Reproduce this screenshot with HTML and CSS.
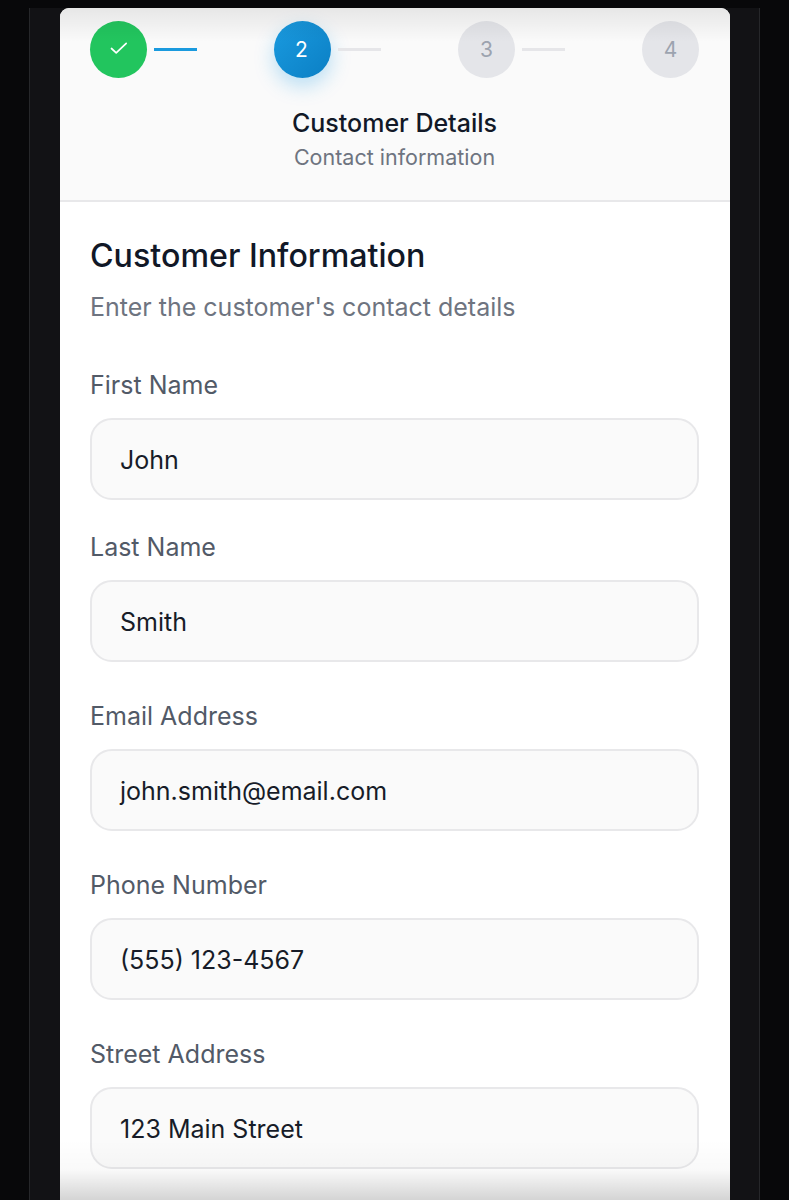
FILE: index.html
```html
<!DOCTYPE html>
<html lang="en">
<head>
    <meta charset="UTF-8">
    <meta name="viewport" content="width=device-width, initial-scale=1.0">
    <title>Customer Details</title>
    <link rel="stylesheet" href="styles.css">
</head>
<body>
    <div class="phone-frame">
        <div class="phone-bezel">
            <div class="card">
                <div class="wizard-header">
                    <div class="stepper">
                        <div class="step">
                            <div class="step-circle done">
                                <svg class="check" width="20" height="20" viewBox="0 0 20 20" fill="none" stroke="#fff" stroke-width="1.7" stroke-linecap="round" stroke-linejoin="round"><path d="M2.5 10.5l4.7 4.3 10-9.5"/></svg>
                            </div>
                            <div class="step-line active"></div>
                        </div>
                        <div class="step">
                            <div class="step-circle current">2</div>
                            <div class="step-line"></div>
                        </div>
                        <div class="step">
                            <div class="step-circle">3</div>
                            <div class="step-line"></div>
                        </div>
                        <div class="step last">
                            <div class="step-circle">4</div>
                        </div>
                    </div>
                    <div class="step-title">Customer Details</div>
                    <div class="step-subtitle">Contact information</div>
                </div>
                <div class="form-body">
                    <h2 class="form-title">Customer Information</h2>
                    <p class="form-hint">Enter the customer's contact details</p>
                    <div class="field first">
                        <label>First Name</label>
                        <div class="input">John</div>
                    </div>
                    <div class="field tight">
                        <label>Last Name</label>
                        <div class="input">Smith</div>
                    </div>
                    <div class="field">
                        <label>Email Address</label>
                        <div class="input">john.smith@email.com</div>
                    </div>
                    <div class="field">
                        <label>Phone Number</label>
                        <div class="input">(555) 123-4567</div>
                    </div>
                    <div class="field">
                        <label>Street Address</label>
                        <div class="input">123 Main Street</div>
                    </div>
                </div>
            </div>
        </div>
    </div>
    <div class="fade-top"></div>
    <div class="fade-bottom"></div>
</body>
</html>
```
FILE: styles.css
```css
* {
    box-sizing: border-box;
}

html, body {
    margin: 0;
    padding: 0;
    height: 1200px;
    overflow: hidden;
}

body {
    font-family: 'Inter', 'Liberation Sans', sans-serif;
    background-color: #08080a;
    position: relative;
}

.phone-frame {
    height: 1200px;
    padding: 8px 29px 0 29px;
}

.phone-bezel {
    height: 100%;
    background-color: #121215;
    border-left: 1px solid #26272a;
    border-right: 1px solid #26272a;
    padding: 0 29px 0 30px;
}

.card {
    height: 100%;
    background-color: #fff;
    border-radius: 9px 9px 0 0;
    overflow: hidden;
}

.wizard-header {
    height: 194px;
    background-color: #fafafa;
    border-bottom: 2px solid #e8e8ea;
    padding: 13px 31px 0 30px;
}

.stepper {
    display: flex;
    justify-content: space-between;
}

.step {
    display: flex;
    align-items: center;
    width: 107px;
}

.step.last {
    width: 57px;
}

.step-circle {
    width: 57px;
    height: 57px;
    flex-shrink: 0;
    border-radius: 50%;
    background-color: #e4e5e9;
    color: #9ca3af;
    font-size: 21px;
    display: flex;
    justify-content: center;
    align-items: center;
}

.step-circle.done {
    background-color: #22c55e;
}

.step-circle.current {
    background: linear-gradient(135deg, #1a9be0, #0b7fc4);
    color: #fff;
    padding-right: 2px;
    box-shadow: 0 8px 20px rgba(14, 150, 230, 0.28);
}

.check {
    margin-top: -3px;
}

.step-line {
    width: 43px;
    height: 3px;
    margin-left: 7px;
    background-color: #e6e6e9;
}

.step-line.active {
    background-color: #1a9ade;
}

.step-title {
    margin-top: 28px;
    text-align: center;
    font-size: 25px;
    line-height: 34px;
    font-weight: 500;
    color: #111827;
}

.step-subtitle {
    margin-top: 1px;
    text-align: center;
    font-size: 21.5px;
    line-height: 32px;
    color: #6e7480;
}

.form-body {
    padding: 31px 31px 0 30px;
}

.form-title {
    margin: 0;
    font-size: 32.2px;
    line-height: 46px;
    font-weight: 500;
    color: #111827;
}

.form-hint {
    margin: 11px 0 0 0;
    font-size: 25px;
    line-height: 34px;
    color: #6e7480;
}

.field {
    margin-top: 37px;
}

.field.first {
    margin-top: 44px;
}

.field.tight {
    margin-top: 30px;
}

.field label {
    display: block;
    font-size: 25px;
    line-height: 34px;
    color: #525a67;
    margin-bottom: 16px;
}

.input {
    height: 82px;
    background-color: #fafafa;
    border: 2px solid #e8e8ea;
    border-radius: 22px;
    padding: 1px 28px 0 28px;
    display: flex;
    align-items: center;
    font-size: 25px;
    color: #171c28;
}

.fade-top {
    position: absolute;
    left: 60px;
    top: 8px;
    width: 670px;
    height: 34px;
    background: linear-gradient(to bottom, rgba(0, 0, 0, 0.08), rgba(0, 0, 0, 0));
}

.fade-bottom {
    position: absolute;
    left: 60px;
    top: 1140px;
    width: 670px;
    height: 60px;
    background: linear-gradient(to bottom, rgba(0, 0, 0, 0), rgba(0, 0, 0, 0.025) 50%, rgba(0, 0, 0, 0.17));
}
```
